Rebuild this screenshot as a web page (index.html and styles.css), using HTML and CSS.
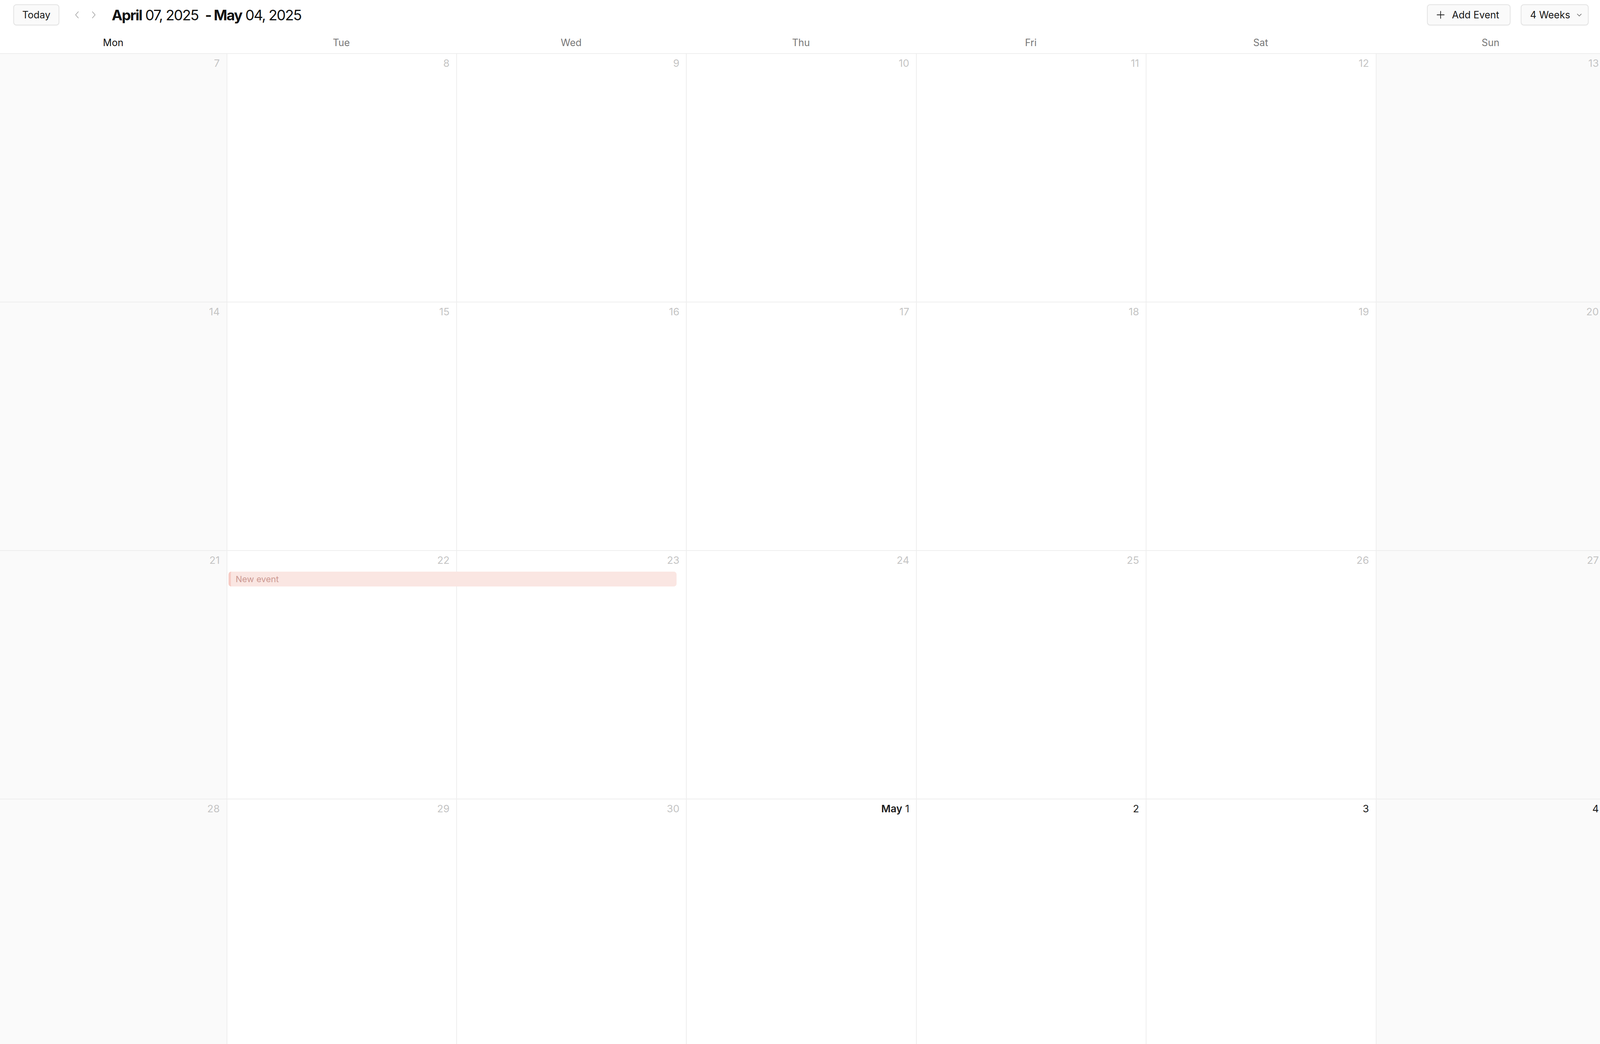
FILE: index.html
```html
<!DOCTYPE html>
<html lang="en">
  <head>
    <meta charset="UTF-8" />
    <meta name="viewport" content="width=device-width, initial-scale=1.0" />
    <title>Calendar</title>
    <link rel="stylesheet" href="styles.css">
  </head>
  <body>

    <!-- Toolbar -->
    <div class="toolbar">
      <div class="toolbar-left">
        <button class="btn today">Today</button>
        <div class="nav">
          <svg class="chev" viewBox="0 0 10 18" width="10" height="18"><path d="M8.5 1 L1.5 9 L8.5 17" /></svg>
          <svg class="chev" viewBox="0 0 10 18" width="10" height="18"><path d="M1.5 1 L8.5 9 L1.5 17" /></svg>
        </div>
        <h1 class="range"><b>April</b> 07, 2025&nbsp; <b>- May</b> 04, 2025</h1>
      </div>
      <div class="toolbar-right">
        <button class="btn add">
          <svg class="plus" viewBox="0 0 20 20" width="20" height="20"><path d="M10 1 V19 M1 10 H19" /></svg>
          Add Event
        </button>
        <button class="btn weeks">
          4 Weeks
          <svg class="down" viewBox="0 0 12 7" width="12" height="7"><path d="M1 1 L6 6 L11 1" /></svg>
        </button>
      </div>
    </div>

    <!-- Calendar -->
    <div class="calendar-wrap">
      <div class="calendar">
        <div class="weekdays">
          <div class="wd current">Mon</div>
          <div class="wd">Tue</div>
          <div class="wd">Wed</div>
          <div class="wd">Thu</div>
          <div class="wd">Fri</div>
          <div class="wd">Sat</div>
          <div class="wd">Sun</div>
        </div>

        <div class="week">
          <div class="day shade"><span class="num">7</span></div>
          <div class="day"><span class="num">8</span></div>
          <div class="day"><span class="num">9</span></div>
          <div class="day"><span class="num">10</span></div>
          <div class="day"><span class="num">11</span></div>
          <div class="day"><span class="num">12</span></div>
          <div class="day shade"><span class="num">13</span></div>
        </div>

        <div class="week">
          <div class="day shade"><span class="num">14</span></div>
          <div class="day"><span class="num">15</span></div>
          <div class="day"><span class="num">16</span></div>
          <div class="day"><span class="num">17</span></div>
          <div class="day"><span class="num">18</span></div>
          <div class="day"><span class="num">19</span></div>
          <div class="day shade"><span class="num">20</span></div>
        </div>

        <div class="week">
          <div class="day shade"><span class="num">21</span></div>
          <div class="day"><span class="num">22</span></div>
          <div class="day"><span class="num">23</span></div>
          <div class="day"><span class="num">24</span></div>
          <div class="day"><span class="num">25</span></div>
          <div class="day"><span class="num">26</span></div>
          <div class="day shade"><span class="num">27</span></div>
          <div class="event">New event</div>
        </div>

        <div class="week last">
          <div class="day shade"><span class="num">28</span></div>
          <div class="day"><span class="num">29</span></div>
          <div class="day"><span class="num">30</span></div>
          <div class="day month"><span class="num"><strong>May</strong> 1</span></div>
          <div class="day month"><span class="num">2</span></div>
          <div class="day month"><span class="num">3</span></div>
          <div class="day shade month"><span class="num">4</span></div>
        </div>
      </div>
    </div>

  </body>
</html>
```

FILE: styles.css
```css
      html,
      body {
        margin: 0;
        height: 100%;
        overflow: hidden;
      }

      body {
        font-family: Inter, "Noto Sans", sans-serif;
        background: #fff;
        color: #111;
        display: flex;
        flex-direction: column;
      }

      /* top bar */
      .toolbar {
        flex: none;
        height: 76px;
        display: flex;
        align-items: center;
        justify-content: space-between;
        padding: 0 29px 0 34px;
      }

      .toolbar-left,
      .toolbar-right {
        display: flex;
        align-items: center;
      }

      .toolbar-right {
        gap: 26px;
      }

      .btn {
        font-family: inherit;
        font-size: 25px;
        color: #161616;
        height: 54px;
        background: #fafafa;
        border: 2px solid #e4e4e4;
        border-radius: 8px;
        box-shadow: 0 1px 1px rgba(0, 0, 0, 0.04);
        display: flex;
        align-items: center;
        cursor: pointer;
      }

      .today {
        width: 118px;
        justify-content: center;
        padding: 0;
      }

      .nav {
        display: flex;
        align-items: center;
        gap: 33px;
        margin: 0 41px 0 40px;
      }

      .chev path,
      .down path,
      .plus path {
        fill: none;
        stroke-linecap: round;
        stroke-linejoin: round;
      }

      .chev path {
        stroke: #9a9a9a;
        stroke-width: 1.4;
      }

      .range {
        margin: 0;
        font-size: 37px;
        font-weight: 400;
        letter-spacing: -0.05em;
        white-space: pre;
      }

      .range b {
        font-weight: 700;
      }

      .add {
        width: 214px;
        padding: 0 0 0 23px;
        gap: 19px;
      }

      .plus path {
        stroke: #222;
        stroke-width: 1.8;
      }

      .weeks {
        width: 174px;
        padding: 0 0 0 22px;
        gap: 17px;
      }

      .down path {
        stroke: #555;
        stroke-width: 1.3;
      }

      /* grid: runs a little past the right edge, as in the app */
      .calendar-wrap {
        flex: 1;
        min-height: 0;
        overflow: hidden;
      }

      .calendar {
        width: calc(100% + 14px);
      }

      .weekdays,
      .week {
        display: grid;
        grid-template-columns: 588fr repeat(6, 597fr);
      }

      .weekdays {
        height: 62px;
        box-sizing: border-box;
        padding-top: 17px;
        border-bottom: 2px solid #eeeeee;
      }

      .wd {
        text-align: center;
        font-size: 25px;
        line-height: 32px;
        color: #777;
      }

      .wd.current {
        color: #111;
      }

      .week {
        position: relative;
        height: 636px;
        box-sizing: border-box;
        border-bottom: 2px solid #eeeeee;
      }

      .day {
        min-width: 0;
        text-align: right;
        padding: 8px 17px 0 0;
      }

      .day + .day {
        border-left: 2px solid #eeeeee;
      }

      .day.shade {
        background: #fafafa;
      }

      .num {
        font-size: 26px;
        line-height: 32px;
        color: #c4c4c4;
      }

      .month .num {
        color: #1a1a1a;
      }

      .num strong {
        font-weight: 600;
      }

      .event {
        position: absolute;
        top: 53px;
        left: 14.24%;
        width: 27.91%;
        height: 38px;
        box-sizing: border-box;
        background: #fae6e2;
        border-left: 6px solid #f6cbc4;
        border-radius: 7px;
        padding-left: 12px;
        font-size: 22px;
        line-height: 38px;
        color: #cc9992;
      }
```
